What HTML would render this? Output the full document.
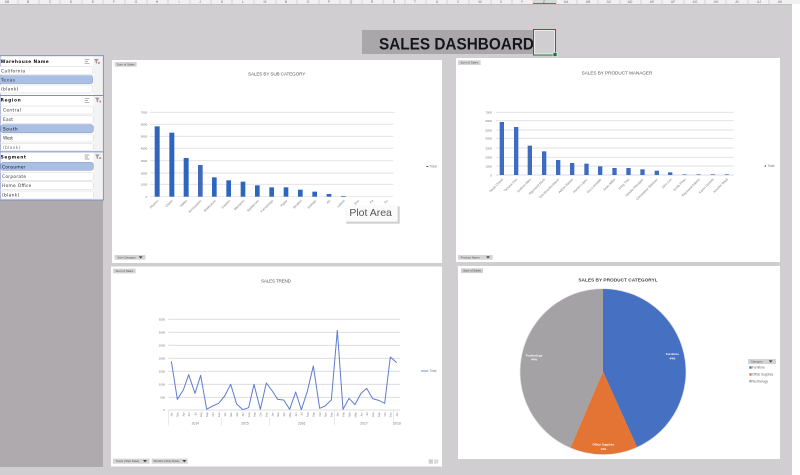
<!DOCTYPE html>
<html><head><meta charset="utf-8"><style>
html,body{margin:0;padding:0;background:#d1ced1;width:800px;height:475px;overflow:hidden}
svg{display:block;font-family:"Liberation Sans",sans-serif}
.soft{filter:blur(.35px)}
</style></head><body>
<svg width="800" height="475" viewBox="0 0 800 475" xmlns="http://www.w3.org/2000/svg">
<rect width="800" height="475" fill="#d1ced1"/>
<rect x="792" width="8" height="475" fill="#fff"/>
<rect width="800" height="4" fill="#f1f1f1"/>
<rect y="4" width="792" height=".6" fill="#b5b5b5"/>
<g stroke="#c4c4c4" stroke-width=".7"><path d="M18 0V4M39 0V4M60 0V4M82 0V4M103 0V4M125 0V4M147 0V4M168 0V4M190 0V4M211 0V4M232 0V4M254 0V4M276 0V4M297 0V4M319 0V4M340 0V4M362 0V4M383 0V4M405 0V4M426 0V4M447 0V4M469 0V4M491 0V4M512 0V4M533 0V4M556 0V4M577 0V4M598 0V4M620 0V4M641 0V4M662 0V4M684 0V4M705 0V4M726 0V4M748 0V4M769 0V4"/></g>
<rect x="533" y="0" width="23" height="4" fill="#d8d8d8"/><rect x="533" y="3.2" width="23" height=".8" fill="#1d7a45"/>
<g fill="#777" font-size="3.5" text-anchor="middle" class="soft"><text x="7" y="3">AB</text><text x="28" y="3">B</text><text x="50" y="3">C</text><text x="71" y="3">D</text><text x="93" y="3">E</text><text x="114" y="3">F</text><text x="136" y="3">G</text><text x="157" y="3">H</text><text x="179" y="3">I</text><text x="200" y="3">J</text><text x="222" y="3">K</text><text x="243" y="3">L</text><text x="265" y="3">M</text><text x="286" y="3">N</text><text x="308" y="3">O</text><text x="329" y="3">P</text><text x="351" y="3">Q</text><text x="372" y="3">R</text><text x="394" y="3">S</text><text x="415" y="3">T</text><text x="437" y="3">U</text><text x="458" y="3">V</text><text x="480" y="3">W</text><text x="501" y="3">X</text><text x="522" y="3">Y</text><text x="544" y="3">Z</text><text x="566" y="3">AA</text><text x="588" y="3">AB</text><text x="609" y="3">AC</text><text x="630" y="3">AD</text><text x="652" y="3">AE</text><text x="673" y="3">AF</text><text x="695" y="3">AG</text><text x="716" y="3">AH</text><text x="737" y="3">AI</text><text x="759" y="3">AJ</text><text x="780" y="3">AK</text></g>

<!-- title -->
<rect x="362" y="30" width="171" height="24" fill="#aaa7aa"/>
<text x="379" y="49.5" font-size="17" font-weight="700" fill="#15151c" textLength="155" lengthAdjust="spacingAndGlyphs" class="soft">SALES DASHBOARD</text>
<rect x="533.5" y="29.5" width="22" height="25.5" fill="#d1ced1" stroke="#1d7a45" stroke-width="1"/>
<rect x="534.6" y="30.6" width="19.8" height="23.3" fill="none" stroke="#f4f4f4" stroke-width=".8"/>
<rect x="553" y="52.5" width="4" height="4" fill="#1d7a45" stroke="#fff" stroke-width=".5"/>

<!-- grey area below slicers -->
<rect x="0" y="198" width="103" height="269" fill="#aeaaad"/>

<!-- slicers -->
<g transform="scale(.33333) translate(0,150)">
<rect x="0" y="17" width="310" height="433" fill="#fff" stroke="#7e8dc6" stroke-width="3"/>
<rect x="280" y="20" width="28" height="428" fill="#f3f3f4"/>
<g class="soft">
<text x="2" y="39" font-size="13" font-weight="700" fill="#111" font-family="'DejaVu Sans',sans-serif" textLength="144">Warehouse Name</text>
<text x="2" y="155" font-size="13" font-weight="700" fill="#111" font-family="'DejaVu Sans',sans-serif" textLength="60">Region</text>
<text x="2" y="326" font-size="13" font-weight="700" fill="#111" font-family="'DejaVu Sans',sans-serif" textLength="76">Segment</text>
<path d="M254 28h14M254 34h10M254 40h14M254 145h14M254 151h10M254 157h14M254 315h14M254 321h10M254 327h14" stroke="#8a8a8a" stroke-width="2" fill="none"/>
<path d="M282 27h14l-5 7v7l-4-2v-5zM285 143h14l-5 7v7l-4-2v-5zM285 313h14l-5 7v7l-4-2v-5z" fill="#9a9a9a"/>
<path d="M294 36l5 5m0-5l-5 5M298 152l5 5m0-5l-5 5M298 322l5 5m0-5l-5 5" stroke="#d44" stroke-width="1.6"/>
</g>
<rect x="0" y="135" width="310" height="3" fill="#7e8dc6"/>
<rect x="0" y="304" width="310" height="3" fill="#7e8dc6"/>
<g stroke="#d4d4d8" stroke-width="1.5" fill="#fff">
<rect x="-6" y="50" width="284" height="24" rx="5"/>
<rect x="-6" y="77" width="284" height="24" rx="5" fill="#aabfe4" stroke="#8ea0c8"/>
<rect x="-6" y="105" width="284" height="24" rx="5"/>
<rect x="2" y="168" width="278" height="24" rx="7"/>
<rect x="2" y="196" width="278" height="24" rx="7"/>
<rect x="2" y="224" width="278" height="24" rx="7" fill="#aabfe4" stroke="#8194c0"/>
<rect x="2" y="252" width="278" height="24" rx="7"/>
<rect x="2" y="280" width="278" height="22" rx="7"/>
<rect x="2" y="337" width="278" height="24" rx="7" fill="#aabfe4" stroke="#8194c0"/>
<rect x="2" y="367" width="278" height="24" rx="7"/>
<rect x="2" y="395" width="278" height="24" rx="7"/>
<rect x="2" y="423" width="278" height="24" rx="7"/>
</g>
<g font-size="13" fill="#333" font-family="'DejaVu Sans',sans-serif" class="soft">
<text x="3" y="67" textLength="72">California</text>
<text x="3" y="94" textLength="42">Texas</text>
<text x="3" y="122" textLength="52">(blank)</text>
<text x="9" y="185" textLength="54">Central</text>
<text x="9" y="213" textLength="30">East</text>
<text x="9" y="241" textLength="44" fill="#111">South</text>
<text x="9" y="269" textLength="30">West</text>
<text x="9" y="297" textLength="52" fill="#777">(blank)</text>
<text x="6" y="356" textLength="70" fill="#111">Consumer</text>
<text x="6" y="384" textLength="72">Corporate</text>
<text x="6" y="411" textLength="88">Home Office</text>
<text x="6" y="439" textLength="52">(blank)</text>
</g>
</g>

<!-- chart 1 -->
<rect x="112" y="60" width="330" height="203" fill="#fff"/>
<g transform="translate(110,55) scale(.33333)">
<g stroke="#e0e0e4" stroke-width="2.8"><path d="M120 172H855M120 208H850M120 244H850M120 280H850M120 317H850M120 354H850M120 388H850"/></g>
<path d="M120 425H850" stroke="#dcdce6" stroke-width="2"/>
<g fill="#2f66bd" class="soft">
<rect x="134" y="214" width="15" height="211"/><rect x="178" y="233" width="15" height="192"/><rect x="221" y="309" width="15" height="116"/><rect x="264" y="330" width="14" height="95" fill="#4468bb"/><rect x="306" y="367" width="14" height="58"/><rect x="349" y="376" width="14" height="49"/><rect x="392" y="380" width="14" height="45"/><rect x="435" y="391" width="14" height="34"/><rect x="478" y="397" width="14" height="28"/><rect x="521" y="397" width="14" height="28"/><rect x="564" y="404" width="14" height="21"/><rect x="607" y="410" width="14" height="15"/><rect x="650" y="417" width="14" height="8"/><rect x="693" y="423" width="14" height="2"/>
</g>
<g font-size="9" fill="#777" text-anchor="end" class="soft">
<text x="112" y="176">7000</text><text x="112" y="212">6000</text><text x="112" y="248">5000</text><text x="112" y="284">4000</text><text x="112" y="321">3000</text><text x="112" y="358">2000</text><text x="112" y="392">1000</text><text x="112" y="429">0</text>
</g>
<g font-size="9.5" fill="#777" text-anchor="end" class="soft">
<text transform="translate(146,438) rotate(-45)">Phones</text>
<text transform="translate(189,438) rotate(-45)">Chairs</text>
<text transform="translate(232,438) rotate(-45)">Tables</text>
<text transform="translate(275,438) rotate(-45)">Accessories</text>
<text transform="translate(318,438) rotate(-45)">Bookcases</text>
<text transform="translate(361,438) rotate(-45)">Copiers</text>
<text transform="translate(404,438) rotate(-45)">Machines</text>
<text transform="translate(447,438) rotate(-45)">Appliances</text>
<text transform="translate(490,438) rotate(-45)">Furnishings</text>
<text transform="translate(533,438) rotate(-45)">Paper</text>
<text transform="translate(576,438) rotate(-45)">Binders</text>
<text transform="translate(619,438) rotate(-45)">Storage</text>
<text transform="translate(662,438) rotate(-45)">Art</text>
<text transform="translate(705,438) rotate(-45)">Labels</text>
<text transform="translate(748,438) rotate(-45)">Env</text>
<text transform="translate(791,438) rotate(-45)">Fa</text>
<text transform="translate(834,438) rotate(-45)">Su</text>
</g>
<text x="500" y="62" font-size="14" fill="#555" text-anchor="middle" class="soft" textLength="172">SALES BY SUB CATEGORY</text>
<rect x="14" y="21" width="66" height="14" fill="#d4d4d4"/><text x="47" y="31" font-size="9" fill="#555" text-anchor="middle" class="soft">Sum of Sales</text>
<rect x="14" y="600" width="92" height="14" fill="#d4d4d4"/><text x="22" y="610" font-size="9" fill="#555" class="soft">Sub-Category</text><path d="M86 604h12l-6 7z" fill="#444"/>
<rect x="949" y="333" width="6" height="3" fill="#2f50b5"/><text x="959" y="338" font-size="10" fill="#777" class="soft">Total</text>
<rect x="705" y="450" width="160" height="52" fill="#b9b9b9" opacity=".7" transform="translate(4,4)"/>
<rect x="705" y="450" width="158" height="50" fill="#fbfbfb"/>
<text x="718" y="483" font-size="31.5" fill="#555" class="soft">Plot Area</text>
</g>

<!-- chart 2 -->
<rect x="456" y="58" width="324" height="204" fill="#fff"/>
<g transform="translate(450,55) scale(.33333)">
<g stroke="#dfdfe2" stroke-width="2.8"><path d="M138 172H850M138 197H850M138 225H850M138 250H850M138 279H850M138 307H850M138 333H850"/></g>
<path d="M138 360H852" stroke="#c9cfe8" stroke-width="2"/>
<g fill="#3d6cc0" class="soft">
<rect x="149" y="201" width="13" height="159"/><rect x="192" y="216" width="13" height="144"/><rect x="233" y="272" width="13" height="88"/><rect x="276" y="289" width="13" height="71"/><rect x="318" y="315" width="13" height="45"/><rect x="360" y="324" width="13" height="36"/><rect x="403" y="326" width="13" height="34"/><rect x="444" y="334" width="13" height="26"/><rect x="487" y="339" width="13" height="21"/><rect x="529" y="339" width="13" height="21"/><rect x="571" y="343" width="13" height="17"/><rect x="614" y="347" width="13" height="13"/><rect x="654" y="352" width="13" height="8"/><rect x="697" y="357" width="13" height="3" opacity=".6"/><rect x="739" y="357" width="13" height="3" opacity=".6"/><rect x="782" y="357" width="13" height="3" opacity=".6"/><rect x="824" y="357" width="13" height="3" opacity=".6"/>
</g>
<g font-size="9" fill="#777" text-anchor="end" class="soft">
<text x="126" y="175">7000</text><text x="126" y="201">6000</text><text x="126" y="229">5000</text><text x="126" y="254">4000</text><text x="126" y="283">3000</text><text x="126" y="311">2000</text><text x="126" y="337">1000</text><text x="126" y="364">0</text>
</g>
<g font-size="9.5" fill="#777" text-anchor="end" class="soft">
<text transform="translate(160,374) rotate(-45)">Sanjit Chand</text>
<text transform="translate(202,374) rotate(-45)">Tamara Chu</text>
<text transform="translate(244,374) rotate(-45)">Andrew Allen</text>
<text transform="translate(286,374) rotate(-45)">Raymond Buch</text>
<text transform="translate(328,374) rotate(-45)">Tom Boeckenhauer</text>
<text transform="translate(370,374) rotate(-45)">Adrian Barton</text>
<text transform="translate(413,374) rotate(-45)">Hunter Lopez</text>
<text transform="translate(455,374) rotate(-45)">Ken Lonsdale</text>
<text transform="translate(497,374) rotate(-45)">Sean Miller</text>
<text transform="translate(539,374) rotate(-45)">Greg Tran</text>
<text transform="translate(581,374) rotate(-45)">Sandra Flanagan</text>
<text transform="translate(624,374) rotate(-45)">Christopher Martinez</text>
<text transform="translate(666,374) rotate(-45)">John Lee</text>
<text transform="translate(708,374) rotate(-45)">Emily Phan</text>
<text transform="translate(750,374) rotate(-45)">Raymond Adams</text>
<text transform="translate(792,374) rotate(-45)">Karen Daniels</text>
<text transform="translate(834,374) rotate(-45)">Jennifer Ward</text>
</g>
<text x="501" y="58" font-size="14" fill="#555" text-anchor="middle" class="soft" textLength="212">SALES BY PRODUCT MANAGER</text>
<rect x="24" y="16" width="68" height="14" fill="#d4d4d4"/><text x="58" y="26" font-size="9" fill="#555" text-anchor="middle" class="soft">Sum of Sales</text>
<rect x="24" y="600" width="104" height="14" fill="#d4d4d4"/><text x="32" y="610" font-size="9" fill="#555" class="soft">Product Name</text><path d="M108 604h12l-6 7z" fill="#444"/>
<rect x="944" y="331" width="4" height="4" fill="#2f50b5"/><text x="952" y="336" font-size="10" fill="#777" class="soft">Total</text>
</g>

<!-- chart 3 -->
<rect x="111" y="266.5" width="331" height="200" fill="#fff"/>
<g transform="translate(105,262) scale(.33333)">
<g stroke="#d8d8dc" stroke-width="2.4"><path d="M190 172H885M190 211H885M190 250H885M190 289H885M190 328H885M190 367H885M190 406H885"/></g>
<path d="M190 444H885" stroke="#d2d2d8" stroke-width="2"/>
<polyline fill="none" stroke="#5f7bd0" stroke-width="3" stroke-linejoin="round" points="199,298 217,412 235,384 251,338 270,394 287,340 305,442 323,432 341,424 359,402 377,367 395,426 413,443 431,437 447,367 466,442 484,363 502,387 518,412 536,414 554,442 572,390 589,443 607,388 625,312 644,439 660,432 679,414 697,205 714,442 732,409 750,428 768,394 785,379 803,410 821,415 839,424 856,285 875,302"/>
<g font-size="8.5" fill="#777" text-anchor="end" class="soft">
<text x="180" y="175">3500</text><text x="180" y="214">3000</text><text x="180" y="253">2500</text><text x="180" y="292">2000</text><text x="180" y="331">1500</text><text x="180" y="370">1000</text><text x="180" y="409">500</text><text x="180" y="447">0</text>
</g>
<g font-size="8" fill="#777" text-anchor="end" class="soft">
<text transform="translate(203,451) rotate(-90)">Jan</text><text transform="translate(221,451) rotate(-90)">Mar</text><text transform="translate(239,451) rotate(-90)">Apr</text><text transform="translate(255,451) rotate(-90)">Jun</text><text transform="translate(274,451) rotate(-90)">Jul</text><text transform="translate(291,451) rotate(-90)">Aug</text><text transform="translate(309,451) rotate(-90)">Sep</text><text transform="translate(327,451) rotate(-90)">Oct</text><text transform="translate(345,451) rotate(-90)">Dec</text>
<text transform="translate(363,451) rotate(-90)">Jan</text><text transform="translate(381,451) rotate(-90)">Mar</text><text transform="translate(399,451) rotate(-90)">Apr</text><text transform="translate(417,451) rotate(-90)">Jun</text><text transform="translate(435,451) rotate(-90)">Aug</text><text transform="translate(451,451) rotate(-90)">Sep</text><text transform="translate(470,451) rotate(-90)">Oct</text><text transform="translate(488,451) rotate(-90)">Dec</text>
<text transform="translate(506,451) rotate(-90)">Jan</text><text transform="translate(522,451) rotate(-90)">Mar</text><text transform="translate(540,451) rotate(-90)">Apr</text><text transform="translate(558,451) rotate(-90)">May</text><text transform="translate(576,451) rotate(-90)">Jun</text><text transform="translate(593,451) rotate(-90)">Jul</text><text transform="translate(611,451) rotate(-90)">Aug</text><text transform="translate(629,451) rotate(-90)">Sep</text><text transform="translate(648,451) rotate(-90)">Oct</text><text transform="translate(664,451) rotate(-90)">Nov</text><text transform="translate(683,451) rotate(-90)">Dec</text>
<text transform="translate(701,451) rotate(-90)">Jan</text><text transform="translate(718,451) rotate(-90)">Feb</text><text transform="translate(736,451) rotate(-90)">Mar</text><text transform="translate(754,451) rotate(-90)">May</text><text transform="translate(772,451) rotate(-90)">Jun</text><text transform="translate(789,451) rotate(-90)">Jul</text><text transform="translate(807,451) rotate(-90)">Aug</text><text transform="translate(825,451) rotate(-90)">Sep</text><text transform="translate(843,451) rotate(-90)">Oct</text><text transform="translate(860,451) rotate(-90)">Dec</text><text transform="translate(879,451) rotate(-90)">Jan</text>
</g>
<path d="M190 444V491M349 468V491M493 468V491M688 444V491M866 444V491" stroke="#d4d4d8" stroke-width="1.5"/>
<g font-size="10" fill="#777" text-anchor="middle" class="soft"><text x="271" y="487">2014</text><text x="420" y="487">2015</text><text x="590" y="487">2016</text><text x="777" y="487">2017</text><text x="876" y="487">2018</text></g>
<text x="513" y="62" font-size="14" fill="#555" text-anchor="middle" class="soft" textLength="90">SALES TREND</text>
<rect x="24" y="20" width="68" height="14" fill="#d4d4d4"/><text x="58" y="30" font-size="9" fill="#555" text-anchor="middle" class="soft">Sum of Sales</text>
<rect x="24" y="590" width="110" height="15" fill="#d4d4d4"/><text x="32" y="600" font-size="9" fill="#555" class="soft">Years (Ship Date)</text><path d="M114 594h12l-6 7z" fill="#444"/>
<rect x="140" y="590" width="108" height="15" fill="#d4d4d4"/><text x="146" y="600" font-size="9" fill="#555" class="soft">Months (Ship Date)</text><path d="M232 594h12l-6 7z" fill="#444"/>
<rect x="971" y="592" width="13" height="13" fill="#cfcfcf"/><rect x="987" y="592" width="13" height="13" fill="#dcdcdc"/>
<path d="M948 327h22" stroke="#5f7bd0" stroke-width="2.6"/><text x="974" y="330" font-size="9.5" fill="#777" class="soft">Total</text>
</g>

<!-- chart 4 -->
<rect x="458" y="266" width="322" height="193" fill="#fff"/>
<g transform="translate(450,262) scale(.33333)">
<circle cx="459" cy="329" r="250" fill="#c9c9c9" opacity=".6"/>
<path d="M459 329V81A248 248 0 0 1 561 555Z" fill="#4670c2"/>
<path d="M459 329L561 555A248 248 0 0 1 361.6 557Z" fill="#e37434"/>
<path d="M459 329L361.6 557A248 248 0 0 1 459 81Z" fill="#a4a2a5"/>
<g font-size="9" font-weight="700" fill="#fff" text-anchor="middle" class="soft">
<text x="667" y="279">Furniture</text><text x="667" y="292">44%</text>
<text x="252" y="283">Technology</text><text x="252" y="296">44%</text>
<text x="460" y="551">Office Supplies</text><text x="460" y="564">13%</text>
</g>
<text x="504" y="59" font-size="14" fill="#444" font-weight="700" text-anchor="middle" class="soft" textLength="238" lengthAdjust="spacingAndGlyphs">SALES BY PRODUCT CATEGORYL</text>
<rect x="33" y="19" width="66" height="14" fill="#d0d0d0"/><text x="66" y="28" font-size="9" fill="#444" text-anchor="middle" class="soft">Sum of Sales</text>
<rect x="894" y="291" width="84" height="15" fill="#d4d4d4"/><text x="902" y="301" font-size="9" fill="#555" class="soft">Category</text><path d="M956 295h12l-6 7z" fill="#444"/>
<rect x="898" y="313" width="7" height="7" fill="#4670c2"/><text x="906" y="320" font-size="9.5" fill="#666" class="soft">Furniture</text>
<rect x="898" y="334" width="7" height="7" fill="#e37434"/><text x="906" y="341" font-size="9.5" fill="#666" class="soft">Office Supplies</text>
<rect x="898" y="354" width="7" height="7" fill="#a4a2a5"/><text x="906" y="361" font-size="9.5" fill="#666" class="soft">Technology</text>
</g>
</svg>
</body></html>
